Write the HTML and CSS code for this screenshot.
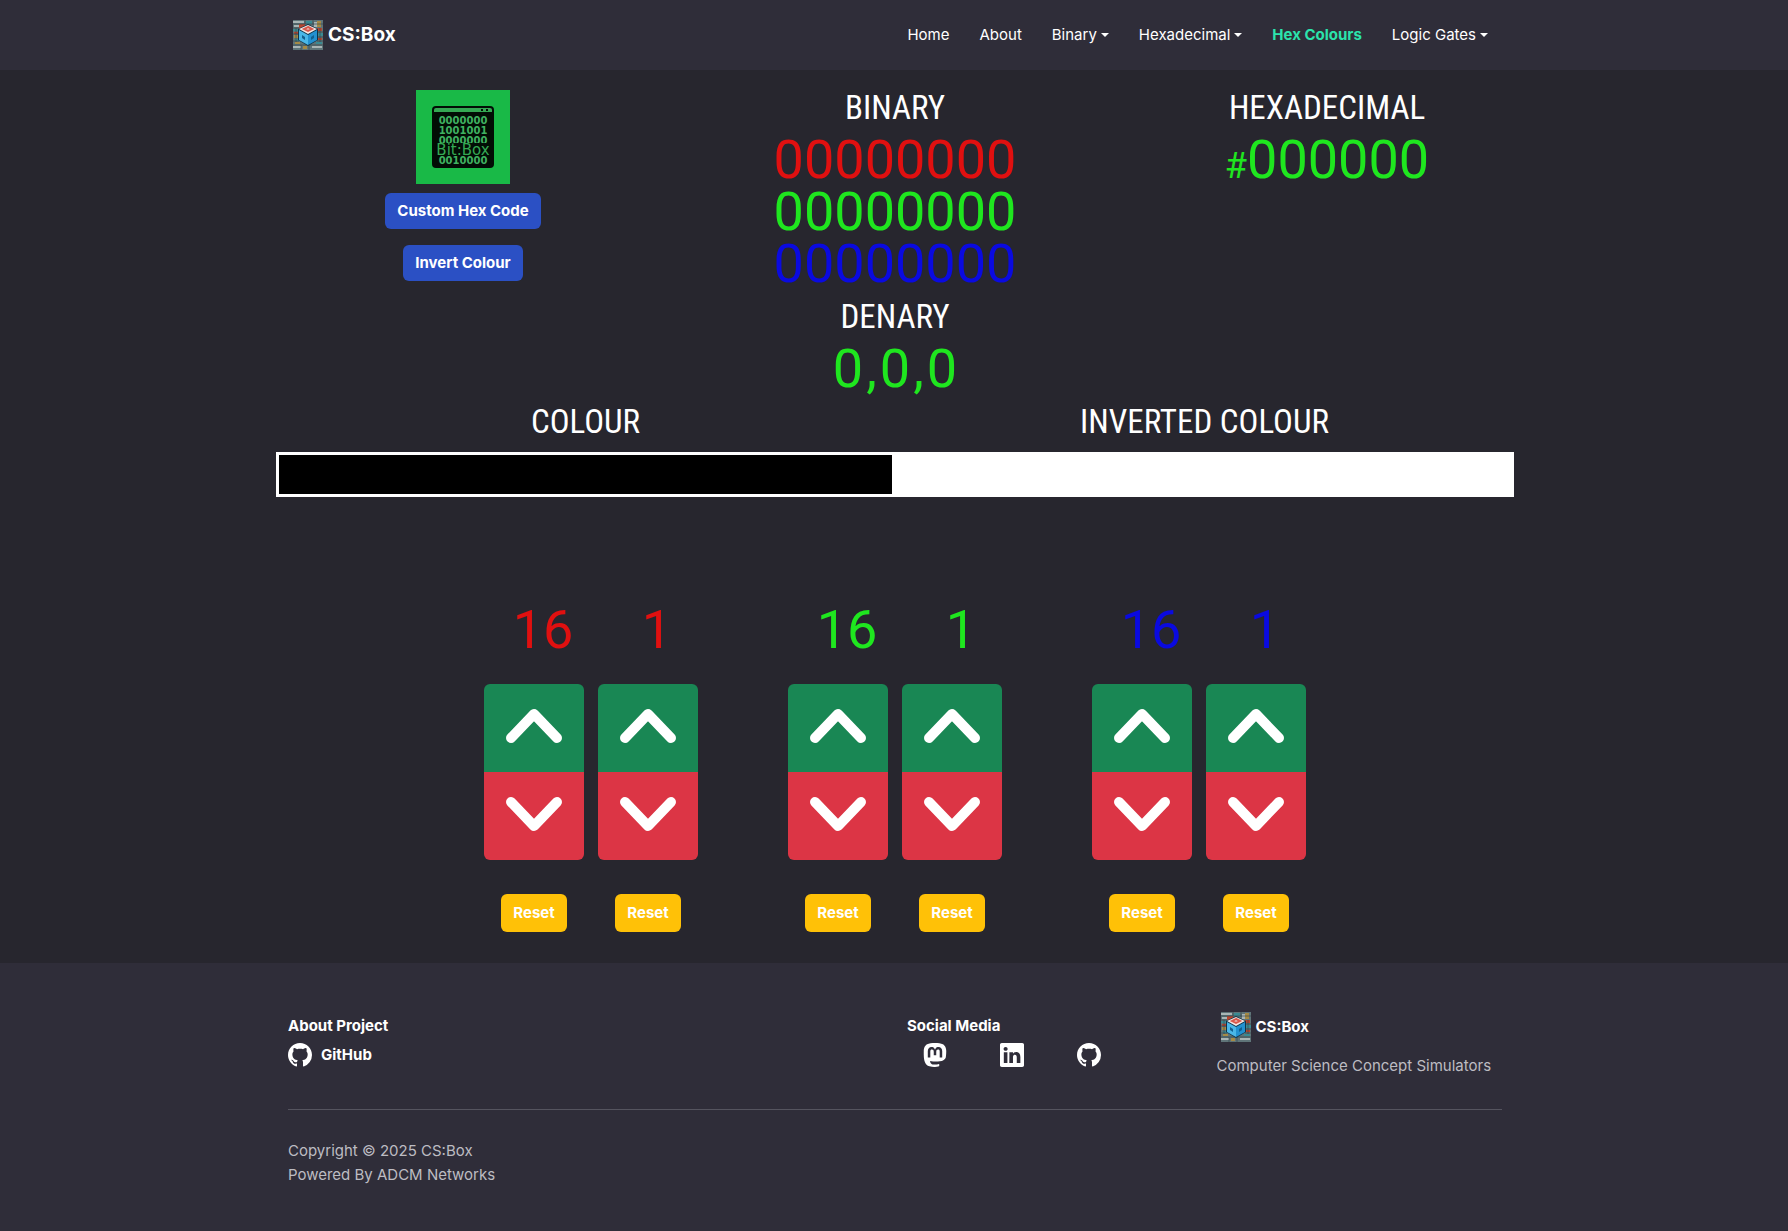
FILE: index.html
```html
<!DOCTYPE html>
<html lang="en">
<head>
<meta charset="utf-8">
<meta name="viewport" content="width=device-width, initial-scale=1">
<title>CS:Box - Hex Colours</title>
<link rel="stylesheet" href="styles.css">
</head>
<body>
<svg class="sprite" aria-hidden="true">
  <symbol id="logo" viewBox="0 0 30 30">
    <rect width="30" height="30" fill="#5f7478"/>
    <path d="M0 1h11v2H0zM1 5h5v2H1zM0 26h8v2H0zM19 26h10v2H19zM21 2h3v5h-3z" fill="#a9b5b5"/>
    <path d="M6 4h6v4H6zM24 8h5v3h-5zM1 12h4v2H1zM25 18h4v2h-4z" fill="#b5452f"/>
    <path d="M24 1h4v6h-4zM1 15h4v3H1zM10 26h4v3h-4zM2 22h5v2H2z" fill="#a58a45"/>
    <path d="M13 1h6v3h-6zM0 9h6v2H0zM24 13h6v3h-6zM23 22h6v2h-6zM2 19h4v2H2z" fill="#3a8a92"/>
    <path d="M0 4h30M0 8h6M24 12h6M0 14h5M25 17h5M0 21h6M24 21h6M0 25h30M12 0v4M20 0v5M8 25v5M16 25v5M27 8v14M3 8v14" stroke="#2f4048" stroke-opacity=".6" fill="none"/>
    <path d="M15 4l10 5v11l-10 6-10-6V9z" fill="#103448"/>
    <path d="M15 5l9 4-9 5-9-5z" fill="#f3e6e2"/>
    <path d="M15 7l4 2-4 2-4-2z" fill="#f3e6e2" stroke="#d9594c" stroke-width="2"/>
    <path d="M6 10l9 5v10l-9-5z" fill="#49b7e8"/>
    <path d="M24 10l-9 5v10l9-5z" fill="#2291d0"/>
    <path d="M9 15l3 2v3l-3-2zM21 15l-3 2v3l3-2z" fill="#12608f"/>
  </symbol>
  <symbol id="github" viewBox="0 0 16 16"><path fill="currentColor" d="M8 0C3.58 0 0 3.58 0 8c0 3.54 2.29 6.53 5.47 7.59.4.07.55-.17.55-.38 0-.19-.01-.82-.01-1.49-2.01.37-2.53-.49-2.69-.94-.09-.23-.48-.94-.82-1.13-.28-.15-.68-.52-.01-.53.63-.01 1.08.58 1.23.82.72 1.21 1.87.87 2.33.66.07-.52.28-.87.51-1.07-1.78-.2-3.64-.89-3.64-3.95 0-.87.31-1.59.82-2.15-.08-.2-.36-1.02.08-2.12 0 0 .67-.21 2.2.82.64-.18 1.32-.27 2-.27s1.36.09 2 .27c1.53-1.04 2.2-.82 2.2-.82.44 1.1.16 1.92.08 2.12.51.56.82 1.27.82 2.15 0 3.07-1.87 3.75-3.65 3.95.29.25.54.73.54 1.48 0 1.07-.01 1.93-.01 2.2 0 .21.15.46.55.38A8.01 8.01 0 0 0 16 8c0-4.42-3.58-8-8-8"/></symbol>
  <symbol id="linkedin" viewBox="0 0 16 16"><path fill="currentColor" d="M0 1.146C0 .513.526 0 1.175 0h13.65C15.474 0 16 .513 16 1.146v13.708c0 .633-.526 1.146-1.175 1.146H1.175C.526 16 0 15.487 0 14.854zm4.943 12.248V6.169H2.542v7.225zm-1.2-8.212c.837 0 1.358-.554 1.358-1.248-.015-.709-.52-1.248-1.342-1.248S2.4 3.226 2.4 3.934c0 .694.521 1.248 1.327 1.248zm4.908 8.212V9.359c0-.216.016-.432.08-.586.173-.431.568-.878 1.232-.878.869 0 1.216.662 1.216 1.634v3.865h2.401V9.25c0-2.22-1.184-3.252-2.764-3.252-1.274 0-1.845.7-2.165 1.193v.025h-.016l.016-.025V6.169h-2.4c.03.678 0 7.225 0 7.225z"/></symbol>
  <symbol id="mastodon" viewBox="0 0 16 16"><path fill="currentColor" d="M11.19 12.195c2.016-.24 3.77-1.475 3.99-2.603.348-1.778.32-4.339.32-4.339 0-3.47-2.286-4.488-2.286-4.488C12.062.238 10.083.017 8.027 0h-.05C5.92.017 3.942.238 2.79.765c0 0-2.285 1.017-2.285 4.488l-.002.662c-.004.64-.007 1.35.011 2.091.083 3.394.626 6.74 3.78 7.57 1.454.383 2.703.463 3.709.408 1.823-.1 2.847-.647 2.847-.647l-.06-1.317s-1.303.41-2.767.36c-1.45-.05-2.98-.156-3.215-1.928a4 4 0 0 1-.033-.496s1.424.346 3.228.428c1.103.05 2.137-.064 3.188-.189zm1.613-2.47H11.13v-4.08c0-.859-.364-1.295-1.091-1.295-.804 0-1.207.517-1.207 1.541v2.233H7.168V5.89c0-1.024-.403-1.541-1.207-1.541-.727 0-1.091.436-1.091 1.296v4.079H3.197V5.522q0-1.288.66-2.046c.456-.505 1.052-.764 1.793-.764.856 0 1.504.328 1.933.983L8 4.39l.417-.695c.429-.655 1.077-.983 1.934-.983.74 0 1.336.259 1.791.764q.662.757.661 2.046z"/></symbol>
  <symbol id="up" viewBox="0 0 56 36"><path d="M5 30L28 6l23 24" fill="none" stroke="currentColor" stroke-width="10" stroke-linecap="round" stroke-linejoin="round"/></symbol>
  <symbol id="down" viewBox="0 0 56 36"><path d="M5 6l23 24L51 6" fill="none" stroke="currentColor" stroke-width="10" stroke-linecap="round" stroke-linejoin="round"/></symbol>
</svg>

<header class="navbar">
  <div class="container navbar-inner">
    <a class="brand" href="#"><svg class="logo" aria-hidden="true"><use href="#logo"/></svg>CS:Box</a>
    <nav class="nav" aria-label="Main">
      <a href="#">Home</a>
      <a href="#">About</a>
      <a class="dropdown" href="#">Binary</a>
      <a class="dropdown" href="#">Hexadecimal</a>
      <a class="active" href="#" aria-current="page">Hex Colours</a>
      <a class="dropdown" href="#">Logic Gates</a>
    </nav>
  </div>
</header>

<main class="main">
  <section class="readouts">
    <div class="tools">
      <svg class="bitbox" viewBox="0 0 94 94" role="img" aria-label="Bit:Box">
        <rect width="94" height="94" fill="#19b947"/>
        <rect x="16" y="16" width="62" height="62" rx="4" fill="#020d05"/>
        <path d="M18 22v-2q0-2 2-2h54q2 0 2 2v2z" fill="#34a853"/>
        <path d="M65 20h2M70 20h2" stroke="#020d05" stroke-width="2"/>
        <g class="bits">
          <text x="47" y="34">0000000</text>
          <text x="47" y="44">1001001</text>
          <text x="47" y="54">0000000</text>
          <text x="47" y="74">0010000</text>
        </g>
        <rect x="18" y="53" width="58" height="13" fill="#020d05"/>
        <text class="bits-name" x="47" y="65">Bit:Box</text>
      </svg>
      <button class="btn btn-primary" type="button">Custom Hex Code</button>
      <button class="btn btn-primary" type="button">Invert Colour</button>
    </div>
    <div class="readout">
      <h2 class="heading">BINARY</h2>
      <p class="value red">00000000</p>
      <p class="value green">00000000</p>
      <p class="value blue">00000000</p>
      <h2 class="heading">DENARY</h2>
      <p class="value green">0<span class="comma">,</span>0<span class="comma">,</span>0</p>
    </div>
    <div class="readout">
      <h2 class="heading">HEXADECIMAL</h2>
      <p class="value green"><span class="hash">#</span>000000</p>
    </div>
  </section>

  <section class="swatches">
    <div><h2 class="heading">COLOUR</h2><div class="swatch black"></div></div>
    <div><h2 class="heading">INVERTED COLOUR</h2><div class="swatch white"></div></div>
  </section>

  <section class="channels">
    <div class="channel red">
      <div class="digit"><p class="value place">16</p>
        <div class="stepper"><button class="up" type="button" aria-label="Increase red 16"><svg><use href="#up"/></svg></button><button class="down" type="button" aria-label="Decrease red 16"><svg><use href="#down"/></svg></button></div>
        <button class="btn btn-warning" type="button">Reset</button></div>
      <div class="digit"><p class="value place">1</p>
        <div class="stepper"><button class="up" type="button" aria-label="Increase red 1"><svg><use href="#up"/></svg></button><button class="down" type="button" aria-label="Decrease red 1"><svg><use href="#down"/></svg></button></div>
        <button class="btn btn-warning" type="button">Reset</button></div>
    </div>
    <div class="channel green">
      <div class="digit"><p class="value place">16</p>
        <div class="stepper"><button class="up" type="button" aria-label="Increase green 16"><svg><use href="#up"/></svg></button><button class="down" type="button" aria-label="Decrease green 16"><svg><use href="#down"/></svg></button></div>
        <button class="btn btn-warning" type="button">Reset</button></div>
      <div class="digit"><p class="value place">1</p>
        <div class="stepper"><button class="up" type="button" aria-label="Increase green 1"><svg><use href="#up"/></svg></button><button class="down" type="button" aria-label="Decrease green 1"><svg><use href="#down"/></svg></button></div>
        <button class="btn btn-warning" type="button">Reset</button></div>
    </div>
    <div class="channel blue">
      <div class="digit"><p class="value place">16</p>
        <div class="stepper"><button class="up" type="button" aria-label="Increase blue 16"><svg><use href="#up"/></svg></button><button class="down" type="button" aria-label="Decrease blue 16"><svg><use href="#down"/></svg></button></div>
        <button class="btn btn-warning" type="button">Reset</button></div>
      <div class="digit"><p class="value place">1</p>
        <div class="stepper"><button class="up" type="button" aria-label="Increase blue 1"><svg><use href="#up"/></svg></button><button class="down" type="button" aria-label="Decrease blue 1"><svg><use href="#down"/></svg></button></div>
        <button class="btn btn-warning" type="button">Reset</button></div>
    </div>
  </section>
</main>

<footer class="footer">
  <div class="container">
    <div class="footer-top">
      <div>
        <h3 class="footer-title">About Project</h3>
        <a class="project" href="#"><svg class="icon" aria-hidden="true"><use href="#github"/></svg>GitHub</a>
      </div>
      <div>
        <h3 class="footer-title">Social Media</h3>
        <div class="social">
          <a href="#" aria-label="Mastodon"><svg class="icon"><use href="#mastodon"/></svg></a>
          <a href="#" aria-label="LinkedIn"><svg class="icon"><use href="#linkedin"/></svg></a>
          <a href="#" aria-label="GitHub"><svg class="icon"><use href="#github"/></svg></a>
        </div>
      </div>
      <div>
        <a class="brand brand-small" href="#"><svg class="logo" aria-hidden="true"><use href="#logo"/></svg>CS:Box</a>
        <p class="tagline">Computer Science Concept Simulators</p>
      </div>
    </div>
    <div class="legal">
      <p>Copyright © 2025 CS:Box</p>
      <p>Powered By ADCM Networks</p>
    </div>
  </div>
</footer>
</body>
</html>
```
FILE: styles.css
```css
* { box-sizing: border-box; }
body {
  margin: 0;
  min-height: 100vh;
  display: flex;
  flex-direction: column;
  background: #27262e;
  color: #fff;
  font: 15px/24px Inter, "Liberation Sans", sans-serif;
}
h2, h3, p { margin: 0; }
a { color: inherit; text-decoration: none; }
button { font: inherit; cursor: pointer; }
.sprite { display: none; }
.container { width: 100%; max-width: 1240px; margin: 0 auto; padding: 0 12px 0 14px; }

.navbar { background: #2f2d39; }
.navbar-inner { display: flex; align-items: center; justify-content: space-between; min-height: 70px; }
.brand { display: flex; align-items: center; gap: 5px; padding-left: 5px; font-size: 19px; font-weight: 700; }
.brand-small { padding-left: 4px; font-size: 15px; }
.logo { width: 30px; height: 30px; }
.nav { display: flex; gap: 30px; padding-right: 14px; }
.nav a { display: flex; align-items: center; gap: 4px; }
.nav .active { color: #2be3ac; font-weight: 700; }
.dropdown::after { content: ""; border: 4px solid transparent; border-top-color: currentColor; border-bottom: 0; }

.main { width: 100%; max-width: 1240px; margin: 0 auto; padding: 11px 0 31px 2px; }
.readouts { display: grid; grid-template-columns: repeat(3, 1fr); column-gap: 58px; }
.readout { text-align: center; }
.heading {
  font: 400 33px/53px "Liberation Sans Narrow", "Roboto Condensed", Roboto, sans-serif;
}
.value { font: 400 54px/52px Roboto, "Liberation Sans", sans-serif; }
.red { color: #e01010; }
.green { color: #1fe61f; }
.blue { color: #0a0ae0; }
.comma { padding: 0 3px; }
.hash { font-size: 36px; }

.tools { display: flex; flex-direction: column; align-items: center; padding-top: 9px; }
.bitbox { width: 94px; height: 94px; margin-bottom: 9px; }
.bits { font: bold 10px "DejaVu Sans", sans-serif; fill: #3fb260; text-anchor: middle; }
.bits-name { font: 15px "DejaVu Sans", sans-serif; fill: #34a853; text-anchor: middle; }
.btn { border: 0; border-radius: 6px; color: #fff; font-weight: 700; }
.btn-primary { padding: 6px 12px; background: #2b50c4; }
.btn-primary + .btn-primary { margin-top: 16px; }
.btn-warning { padding: 7px 12px; background: #ffc107; }

.swatches { display: grid; grid-template-columns: 1fr 1fr; text-align: center; }
.swatch { height: 45px; margin-top: 4px; border: 3px solid #fff; }
.black { background: #000; }
.white { background: #fff; }

.channels { display: flex; justify-content: center; gap: 90px; margin-top: 107px; }
.channel { display: flex; gap: 14px; }
.digit { display: flex; flex-direction: column; align-items: center; width: 100px; }
.place { padding-left: 18px; }
.stepper { display: flex; flex-direction: column; width: 100%; margin: 28px 0 34px; border-radius: 6px; overflow: hidden; }
.stepper button { display: flex; align-items: center; justify-content: center; height: 88px; padding: 0 0 4px; border: 0; color: #fff; }
.stepper svg { width: 56px; height: 36px; overflow: visible; }
.up { background: #198754; }
.down { background: #dc3545; }

.footer { flex: 1; background: #2f2d39; }
.footer-top { display: grid; grid-template-columns: 2fr 1fr 1fr; margin-right: -24px; padding: 49px 0 31px; }
.footer-title { padding-top: 2px; font-size: 15px; line-height: 24px; font-weight: 700; }
.icon { display: block; width: 24px; height: 24px; }
.project { display: flex; align-items: center; gap: 9px; margin-top: 5px; font-weight: 700; }
.social { display: flex; gap: 53px; margin: 5px 0 0 16px; }
.tagline { margin-top: 12px; color: #bdbcc2; white-space: nowrap; }
.legal { padding: 29px 0 40px; border-top: 1px solid #55545f; color: #bdbcc2; }
```
